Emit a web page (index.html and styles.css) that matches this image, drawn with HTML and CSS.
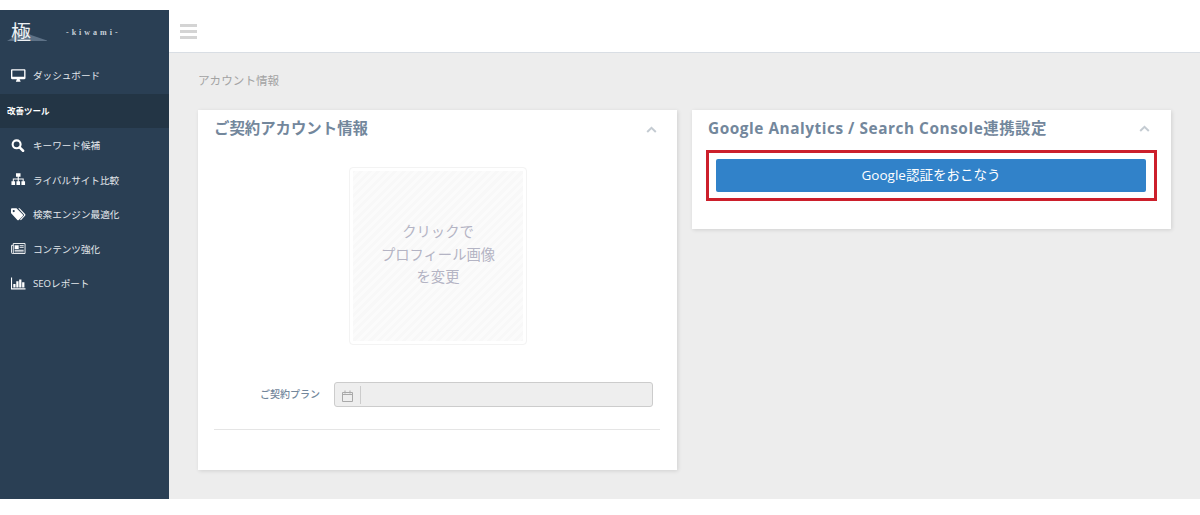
FILE: index.html
```html
<!DOCTYPE html>
<html lang="ja">
<head>
  <meta charset="UTF-8">
  <meta name="viewport" content="width=device-width, initial-scale=1.0">
  <title>アカウント情報</title>
  <link rel="stylesheet" href="styles.css">
</head>
<body>
  <div class="app">
    <aside class="sidebar">
      <div class="logo">
        <div class="logo-mark">
          <svg class="logo-hill" width="40" height="10" viewBox="0 0 40 10"><path d="M0 10 L10 4 L17 0 L24 4 L40 9.500 L40 10 Z" fill="#5d7186"/></svg>
          <span class="logo-kanji">極</span>
        </div>
        <span class="logo-name">- k i w a m i -</span>
      </div>
      <nav>
        <a class="nav-item">
          <svg class="nav-icon" viewBox="0 0 16 14"><path fill="#fff" d="M1.200 0h13.600c.7 0 1.200.5 1.200 1.200v8.600c0 .7-.5 1.200-1.200 1.200H9.600c0 .8.4 1.200.9 2v1H5.500v-1c.5-.8.9-1.200.9-2H1.200C.5 11 0 10.500 0 9.800V1.200C0 .5.500 0 1.200 0zM1.500 1.500V8.500h13V1.500z"/></svg>
          ダッシュボード
        </a>
        <div class="nav-section">改善ツール</div>
        <a class="nav-item">
          <svg class="nav-icon" viewBox="0 0 16 14"><circle cx="6.200" cy="5.700" r="4.400" fill="none" stroke="#fff" stroke-width="2.300"/><path d="M9.500 9l3.800 3.800" stroke="#fff" stroke-width="2.800" stroke-linecap="round"/></svg>
          キーワード候補
        </a>
        <a class="nav-item">
          <svg class="nav-icon" viewBox="0 0 16 14"><path fill="#fff" d="M5.500 0h5v4H8.600v2H14v3h1.500v4h-4V9h1.400V7H8.600v2H10v4H6V9h1.400V7H3.100v2h1.400v4h-4V9H2V6h5.400V4H5.500z"/></svg>
          ライバルサイト比較
        </a>
        <a class="nav-item">
          <svg class="nav-icon" viewBox="0 0 16 14"><path fill="#fff" d="M0 1.200C0 .5.500 0 1.200 0H6l7 7c.5.500.5 1.100 0 1.600l-4.400 4.400c-.5.500-1.100.5-1.600 0L.4 6C.1 5.700 0 5.400 0 5zM3 2a1.200 1.200 0 1 0 0 2.400A1.200 1.200 0 0 0 3 2z"/><path fill="#fff" d="M8 0h1.500l6 6.500c.6.600.6 1.300 0 2l-4.600 4.900-.9-.9 4.200-4.500c.3-.3.3-.6 0-.9z"/></svg>
          検索エンジン最適化
        </a>
        <a class="nav-item">
          <svg class="nav-icon" viewBox="0 0 16 12"><path fill="none" stroke="#fff" d="M2.500.5h13v11h-13zM2.500 2.500H.5v8c0 .6.400 1 1 1h1"/><path fill="#fff" d="M4 2.500h4.500v4H4zM9.500 2.500h4.500v1H9.500zM9.500 4.500h4.500v1H9.500zM4 7.500h10v1H4zM4 9.200h10v1H4z"/></svg>
          コンテンツ強化
        </a>
        <a class="nav-item">
          <svg class="nav-icon" viewBox="0 0 16 13"><path fill="#fff" d="M0 0h1.200v11.800H16V13H0zM2.500 7h2.500v4H2.500zM5.800 4h2.500v7H5.800zM9 2h2.500v9H9zM12.300 5h2.500v6h-2.500z"/></svg>
          SEOレポート
        </a>
      </nav>
    </aside>

    <div class="main">
      <header class="topbar">
        <div class="menu-toggle"><span></span><span></span><span></span></div>
      </header>
      <div class="content">
        <div class="page-title">アカウント情報</div>
        <div class="columns">
          <section class="card card-account">
            <div class="card-head">
              <h2>ご契約アカウント情報</h2>
              <svg class="chevron" width="11" height="7" viewBox="0 0 11 7"><path d="M1.200 6L5.500 1.800 9.800 6" fill="none" stroke="#c4cbd2" stroke-width="2"/></svg>
            </div>
            <div class="profile-image">クリックで<br>プロフィール画像<br>を変更</div>
            <div class="form-row">
              <label>ご契約プラン</label>
              <div class="input-group">
                <span class="input-icon">
                  <svg width="11" height="12" viewBox="0 0 11 12"><path d="M.5 2.500h10v9H.5zM.5 4.500h10M3 .5v3M8 .5v3" fill="none" stroke="#a9a9a9"/></svg>
                </span>
              </div>
            </div>
            <div class="divider"></div>
          </section>

          <section class="card card-google">
            <div class="card-head">
              <h2>Google Analytics / Search Console連携設定</h2>
              <svg class="chevron" width="11" height="7" viewBox="0 0 11 7"><path d="M1.200 6L5.500 1.800 9.800 6" fill="none" stroke="#c4cbd2" stroke-width="2"/></svg>
            </div>
            <div class="highlight">
              <button class="btn-primary">Google認証をおこなう</button>
            </div>
          </section>
        </div>
      </div>
    </div>
  </div>
</body>
</html>
```

FILE: styles.css
```css
* {
  box-sizing: border-box;
  font-family: 'Open Sans', 'Noto Sans CJK JP', sans-serif;
}

body {
  margin: 0;
  padding-top: 10px;
  background-color: #fff;
}

.app {
  display: flex;
  height: 489px;
}

/* sidebar */
.sidebar {
  width: 169px;
  flex: none;
  background-color: #2a3f54;
  color: #e4e8ec;
}

.logo {
  display: flex;
  align-items: center;
  height: 46px;
  padding-left: 11px;
}

.logo-mark {
  position: relative;
  width: 55px;
  height: 36px;
}

.logo-hill {
  position: absolute;
  left: -4px;
  bottom: 10px;
}

.logo-kanji {
  position: relative;
  display: block;
  font-size: 20px;
  line-height: 35px;
  color: #eef1f4;
}

.logo-name {
  margin-bottom: 2px;
  font-family: 'Liberation Serif', serif;
  font-size: 8px;
  font-weight: 700;
  letter-spacing: 0.5px;
  white-space: nowrap;
  color: #c9d1d9;
}

.nav-item {
  display: flex;
  align-items: center;
  height: 34.500px;
  padding-left: 11px;
  font-size: 9.600px;
  color: #e4e8ec;
}

.nav-item:first-child {
  height: 38px;
}

.nav-icon {
  width: 14.500px;
  height: 13px;
  margin-right: 7.500px;
  flex: none;
}

.nav-section {
  display: flex;
  align-items: center;
  height: 34px;
  padding: 0 0 3px 7px;
  background-color: #233545;
  font-size: 8.500px;
  font-weight: 700;
  color: #fff;
}

/* main */
.main {
  flex: 1;
  display: flex;
  flex-direction: column;
  background-color: #ededed;
}

.topbar {
  display: flex;
  align-items: center;
  height: 43px;
  padding-left: 11px;
  background-color: #fff;
  border-bottom: 1px solid #d9dee4;
}

.menu-toggle {
  display: flex;
  flex-direction: column;
  gap: 3px;
  width: 17px;
}

.menu-toggle span {
  height: 3px;
  background-color: #d4d4d4;
}

.content {
  padding: 0 29px;
}

.page-title {
  height: 57px;
  padding-top: 19px;
  font-size: 11.600px;
  line-height: 17px;
  color: #a3a3a3;
}

.columns {
  display: flex;
  align-items: flex-start;
  gap: 15px;
}

.card {
  width: 479px;
  background-color: #fff;
  box-shadow: 1px 1px 4px rgba(0, 0, 0, 0.12);
}

.card-account {
  height: 360px;
  padding: 0 17px 0 16px;
}

.card-google {
  height: 119px;
  padding: 0 14px;
}

.card-head {
  display: flex;
  align-items: center;
  justify-content: space-between;
  height: 37px;
  padding-bottom: 2px;
  padding-right: 3px;
}

.card-google .card-head {
  height: 40px;
  padding: 0 7px 6px 2px;
}

.card-head h2 {
  margin: 0;
  font-size: 15.400px;
  font-weight: 700;
  color: #73879c;
}

.card-google .card-head h2 {
  letter-spacing: 0.53px;
}

.chevron {
  flex: none;
  margin-top: 3px;
}

.profile-image {
  width: 178px;
  height: 178px;
  margin: 20px 0 0 135px;
  padding-bottom: 2px;
  display: flex;
  align-items: center;
  justify-content: center;
  text-align: center;
  font-size: 14.300px;
  line-height: 22.500px;
  color: #b4b4c4;
  background-color: #fafafa;
  background-image: repeating-linear-gradient(-45deg, #fbfbfb 0 3px, #f8f8f8 3px 6px);
  border: 1px solid #f3f3f3;
  box-shadow: inset 0 0 0 3px #fff;
  border-radius: 4px;
}

.form-row {
  display: flex;
  align-items: center;
  margin-top: 37px;
}

.form-row label {
  width: 106px;
  padding-bottom: 2px;
  text-align: right;
  font-size: 10px;
  font-weight: 500;
  color: #73879c;
}

.input-group {
  display: flex;
  align-items: center;
  width: 319px;
  height: 25px;
  margin-left: 14px;
  background-color: #eeeeee;
  border: 1px solid #cccccc;
  border-radius: 3px;
}

.input-icon {
  display: flex;
  align-items: center;
  justify-content: center;
  width: 26px;
  height: 18px;
  padding-top: 2px;
  border-right: 1px solid #cccccc;
}

.divider {
  height: 1px;
  margin-top: 22px;
  background-color: #e5e5e5;
}

.highlight {
  padding: 6px 8px 6px 7px;
  border: 3px solid #cc1f2b;
}

.btn-primary {
  display: block;
  width: 100%;
  height: 33px;
  padding: 0 0 3px;
  background-color: #3182c9;
  color: #fff;
  border: none;
  border-radius: 2px;
  font-size: 13.500px;
}
```
